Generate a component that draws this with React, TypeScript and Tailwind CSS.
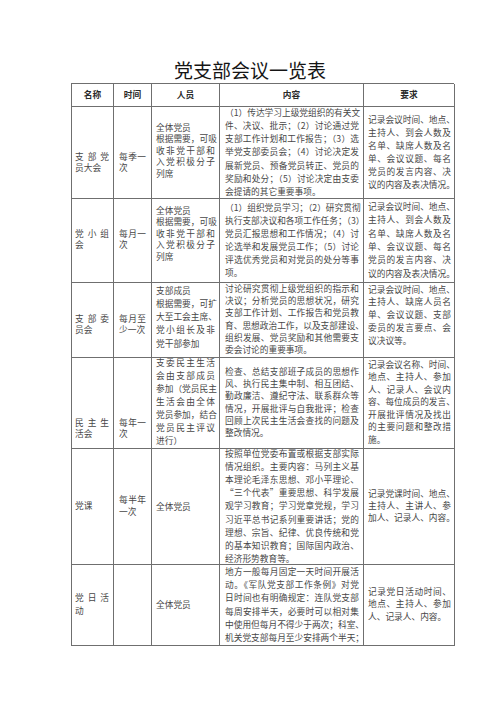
import React from "react";

type Cell = {
  paras: string[][];
  box: string;
  lead: string;
};

type Row = {
  h: string;
  cells: Cell[];
};

const fullMember = [["全体党员"], ["根据需要，可吸", "收非党干部和", "入党积极分子", "列席"]];

const rows: Row[] = [
  {
    h: "h-[92px]",
    cells: [
      { paras: [["支部党", "员大会"]], box: "pt-[44px] pl-[3px] pr-[4px]", lead: "leading-[11.7px]" },
      { paras: [["每季一", "次"]], box: "pt-[44px] pl-[5px] pr-[5px]", lead: "leading-[11.7px]" },
      { paras: fullMember, box: "pt-[15px] pl-[4px] pr-[4px]", lead: "leading-[11.6px]" },
      {
        paras: [[
          "（1）传达学习上级党组织的有关文",
          "件、决议、批示；（2）讨论通过党",
          "支部工作计划和工作报告；（3）选",
          "举党支部委员会；（4）讨论决定发",
          "展新党员、预备党员转正、党员的",
          "奖励和处分；（5）讨论决定由支委",
          "会提请的其它重要事项。",
        ]],
        box: "justify-center pl-[5px] pr-[4px]",
        lead: "leading-[13.1px]",
      },
      {
        paras: [[
          "记录会议时间、地点、",
          "主持人、到会人数及",
          "名单、缺席人数及名",
          "单、会议议题、每名",
          "党员的发言内容、决",
          "议的内容及表决情况。",
        ]],
        box: "justify-center pl-[4px] pr-[3px]",
        lead: "leading-[13.1px]",
      },
    ],
  },
  {
    h: "h-[84px]",
    cells: [
      { paras: [["党小组", "会"]], box: "pt-[29px] pl-[3px] pr-[4px]", lead: "leading-[11.6px]" },
      { paras: [["每月一", "次"]], box: "pt-[29px] pl-[5px] pr-[5px]", lead: "leading-[11.6px]" },
      { paras: fullMember, box: "pt-[6px] pl-[4px] pr-[4px]", lead: "leading-[11.6px]" },
      {
        paras: [[
          "（1）组织党员学习；（2）研究贯彻",
          "执行支部决议和各项工作任务；（3）",
          "党员汇报思想和工作情况；（4）讨",
          "论选举和发展党员工作；（5）讨论",
          "评选优秀党员和对党员的处分等事",
          "项。",
        ]],
        box: "justify-center pl-[5px] pr-[4px]",
        lead: "leading-[13px]",
      },
      {
        paras: [[
          "记录会议时间、地点、",
          "主持人、到会人数及",
          "名单、缺席人数及名",
          "单、会议议题、每名",
          "党员的发言内容、决",
          "议的内容及表决情况。",
        ]],
        box: "justify-center pl-[4px] pr-[3px]",
        lead: "leading-[13.3px]",
      },
    ],
  },
  {
    h: "h-[75px]",
    cells: [
      { paras: [["支部委", "员会"]], box: "pt-[30px] pl-[3px] pr-[4px]", lead: "leading-[11.6px]" },
      { paras: [["每月至", "少一次"]], box: "pt-[30px] pl-[5px] pr-[5px]", lead: "leading-[11.6px]" },
      {
        paras: [["支部成员"], ["根据需要，可扩", "大至工会主席、", "党小组长及非", "党干部参加"]],
        box: "pt-[1px] pl-[4px] pr-[4px]",
        lead: "leading-[13.3px]",
      },
      {
        paras: [[
          "讨论研究贯彻上级党组织的指示和",
          "决议；分析党员的思想状况，研究",
          "支部工作计划、工作报告和党员教",
          "育、思想政治工作，以及支部建设、",
          "组织发展、党员奖励和其他需要支",
          "委会讨论的重要事项。",
        ]],
        box: "justify-center pl-[5px] pr-[4px]",
        lead: "leading-[12.1px]",
      },
      {
        paras: [[
          "记录会议时间、地点、",
          "主持人、缺席人员名",
          "单、会议议题、支部",
          "委员的发言要点、会",
          "议决议等。",
        ]],
        box: "pt-[1px] pl-[4px] pr-[3px]",
        lead: "leading-[12.85px]",
      },
    ],
  },
  {
    h: "h-[91px]",
    cells: [
      { paras: [["民主生", "活会"]], box: "pt-[59px] pl-[3px] pr-[4px]", lead: "leading-[11.6px]" },
      { paras: [["每年一", "次"]], box: "pt-[59px] pl-[5px] pr-[5px]", lead: "leading-[11.6px]" },
      {
        paras: [[
          "支委民主生活",
          "会由支部成员",
          "参加（党员民主",
          "生活会由全体",
          "党员参加，结合",
          "党员民主评议",
          "进行）",
        ]],
        box: "justify-center pl-[4px] pr-[4px]",
        lead: "leading-[12.9px]",
      },
      {
        paras: [[
          "检查、总结支部班子成员的思想作",
          "风、执行民主集中制、相互团结、",
          "勤政廉洁、遵纪守法、联系群众等",
          "情况，开展批评与自我批评；检查",
          "回顾上次民主生活会查找的问题及",
          "整改情况。",
        ]],
        box: "justify-center pl-[5px] pr-[4px]",
        lead: "leading-[12.2px]",
      },
      {
        paras: [[
          "记录会议名称、时间、",
          "地点、主持人、参加",
          "人、记录人、会议内",
          "容、每位成员的发言、",
          "开展批评情况及找出",
          "的主要问题和整改措",
          "施。",
        ]],
        box: "justify-center pl-[4px] pr-[3px]",
        lead: "leading-[12.4px]",
      },
    ],
  },
  {
    h: "h-[116px]",
    cells: [
      { paras: [["党课"]], box: "justify-center pl-[3px] pr-[4px]", lead: "leading-[12px]" },
      { paras: [["每半年", "一次"]], box: "justify-center pl-[5px] pr-[5px]", lead: "leading-[11.6px]" },
      { paras: [["全体党员"]], box: "justify-center pl-[4px] pr-[4px]", lead: "leading-[13px]" },
      {
        paras: [[
          "按照单位党委布置或根据支部实际",
          "情况组织。主要内容：马列主义基",
          "本理论毛泽东思想、邓小平理论、",
          "“三个代表”重要思想、科学发展",
          "观学习教育；学习党章党规，学习",
          "习近平总书记系列重要讲话；党的",
          "理想、宗旨、纪律、优良传统和党",
          "的基本知识教育；国际国内政治、",
          "经济形势教育等。",
        ]],
        box: "justify-center pl-[5px] pr-[4px]",
        lead: "leading-[13.2px]",
      },
      {
        paras: [["记录党课时间、地点、", "主持人、主讲人、参", "加人、记录人、内容。"]],
        box: "justify-center pl-[4px] pr-[3px]",
        lead: "leading-[12px]",
      },
    ],
  },
  {
    h: "h-[81px]",
    cells: [
      { paras: [["党日活", "动"]], box: "justify-center pl-[3px] pr-[4px]", lead: "leading-[12.3px]" },
      { paras: [], box: "justify-center pl-[5px] pr-[5px]", lead: "leading-[11.6px]" },
      { paras: [["全体党员"]], box: "justify-center pl-[4px] pr-[4px]", lead: "leading-[13px]" },
      {
        paras: [[
          "地方一般每月固定一天时间开展活",
          "动。《军队党支部工作条例》对党",
          "日时间也有明确规定：连队党支部",
          "每周安排半天，必要时可以相对集",
          "中使用但每月不得少于两次；科室、",
          "机关党支部每月至少安排两个半天；",
        ]],
        box: "justify-center pl-[5px] pr-[4px]",
        lead: "leading-[13.1px]",
      },
      {
        paras: [["记录党日活动时间、", "地点、主持人、参加", "人、记录人、内容。"]],
        box: "justify-center pl-[4px] pr-[3px]",
        lead: "leading-[12.5px]",
      },
    ],
  },
];

const colWidths = ["w-[42px]", "w-[38px]", "w-[68px]", "w-[144px]", "w-[91px]"];
const heads = ["名称", "时间", "人员", "内容", "要求"];

function CellText({ cell }: { cell: Cell }) {
  return (
    <>
      {cell.paras.map((p, pi) =>
        p.map((line, li) => (
          <div
            key={`${pi}-${li}`}
            className={
              li < p.length - 1
                ? `whitespace-nowrap ${cell.lead} [text-align-last:justify] text-justify`
                : `whitespace-nowrap ${cell.lead}`
            }
          >
            {line}
          </div>
        ))
      )}
    </>
  );
}

export default function App() {
  return (
    <div
      lang="zh-CN"
      className="w-[500px] h-[707px] bg-white text-[#474747] font-['Noto_Sans_CJK_SC','Noto_Sans',sans-serif]"
    >
      <h1 className="pt-[58px] text-center text-[19px] leading-[24px] font-normal text-[#151515]">
        党支部会议一览表
      </h1>
      <div className="ml-[71px] mt-[1px] w-[383px] border-l border-t border-[#6f6f6f] text-[8.7px]">
        <div className="flex h-[22.5px]">
          {heads.map((t, i) => (
            <div
              key={t}
              className={`${colWidths[i]} shrink-0 flex items-center justify-center border-r border-b border-[#6f6f6f] font-bold text-[#2a2a2a]`}
            >
              {t}
            </div>
          ))}
        </div>
        {rows.map((r, ri) => (
          <div key={ri} className={`flex ${r.h}`}>
            {r.cells.map((c, ci) => (
              <div
                key={ci}
                className={`${colWidths[ci]} shrink-0 flex flex-col border-r border-b border-[#6f6f6f] ${c.box}`}
              >
                <CellText cell={c} />
              </div>
            ))}
          </div>
        ))}
      </div>
    </div>
  );
}
